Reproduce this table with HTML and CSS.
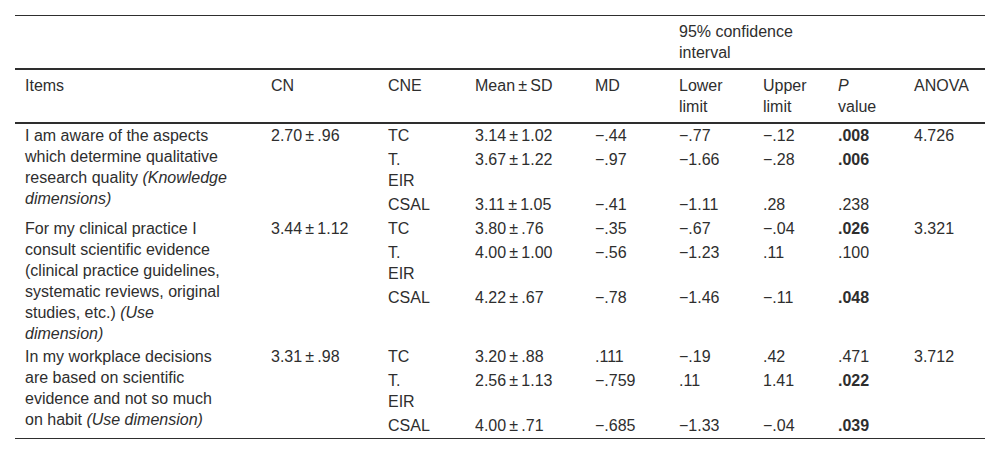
FILE: index.html
```html
<!DOCTYPE html>
<html lang="en">
<head>
<meta charset="utf-8">
<title>Table</title>
<link rel="stylesheet" href="styles.css">
</head>
<body>
<div class="wrap">
<table class="data">
  <colgroup>
    <col class="c-items">
    <col class="c-cn">
    <col class="c-cne">
    <col class="c-mean">
    <col class="c-md">
    <col class="c-lower">
    <col class="c-upper">
    <col class="c-p">
    <col class="c-anova">
  </colgroup>
  <thead>
    <tr class="head-top">
      <th></th><th></th><th></th><th></th><th></th>
      <th colspan="2">95% confidence interval</th>
      <th></th><th></th>
    </tr>
    <tr class="head-main">
      <th>Items</th>
      <th>CN</th>
      <th>CNE</th>
      <th class="nw">Mean&#8201;±&#8201;SD</th>
      <th>MD</th>
      <th>Lower limit</th>
      <th>Upper limit</th>
      <th><i>P</i> value</th>
      <th>ANOVA</th>
    </tr>
  </thead>
  <tbody>
    <tr>
      <td class="item">I am aware of the aspects which determine qualitative research quality <i>(Knowledge dimensions)</i></td>
      <td class="nw">2.70&#8201;±&#8201;.96</td>
      <td colspan="6" class="subcell">
        <div class="sub">
          <div class="cne">TC</div><div>3.14&#8201;±&#8201;1.02</div><div>−.44</div><div>−.77</div><div>−.12</div><div><b>.008</b></div>
          <div class="cne">T. EIR</div><div>3.67&#8201;±&#8201;1.22</div><div>−.97</div><div>−1.66</div><div>−.28</div><div><b>.006</b></div>
          <div class="cne">CSAL</div><div>3.11&#8201;±&#8201;1.05</div><div>−.41</div><div>−1.11</div><div>.28</div><div>.238</div>
        </div>
      </td>
      <td>4.726</td>
    </tr>
    <tr>
      <td class="item">For my clinical practice I consult scientific evidence (clinical practice guidelines, systematic reviews, original studies, etc.) <i>(Use dimension)</i></td>
      <td class="nw">3.44&#8201;±&#8201;1.12</td>
      <td colspan="6" class="subcell">
        <div class="sub">
          <div class="cne">TC</div><div>3.80&#8201;±&#8201;.76</div><div>−.35</div><div>−.67</div><div>−.04</div><div><b>.026</b></div>
          <div class="cne">T. EIR</div><div>4.00&#8201;±&#8201;1.00</div><div>−.56</div><div>−1.23</div><div>.11</div><div>.100</div>
          <div class="cne">CSAL</div><div>4.22&#8201;±&#8201;.67</div><div>−.78</div><div>−1.46</div><div>−.11</div><div><b>.048</b></div>
        </div>
      </td>
      <td>3.321</td>
    </tr>
    <tr>
      <td class="item">In my workplace decisions are based on scientific evidence and not so much on habit <i>(Use dimension)</i></td>
      <td class="nw">3.31&#8201;±&#8201;.98</td>
      <td colspan="6" class="subcell">
        <div class="sub">
          <div class="cne">TC</div><div>3.20&#8201;±&#8201;.88</div><div>.111</div><div>−.19</div><div>.42</div><div>.471</div>
          <div class="cne">T. EIR</div><div>2.56&#8201;±&#8201;1.13</div><div>−.759</div><div>.11</div><div>1.41</div><div><b>.022</b></div>
          <div class="cne">CSAL</div><div>4.00&#8201;±&#8201;.71</div><div>−.685</div><div>−1.33</div><div>−.04</div><div><b>.039</b></div>
        </div>
      </td>
      <td>3.712</td>
    </tr>
  </tbody>
</table>
</div>
</body>
</html>
```

FILE: styles.css
```css
html, body {
  margin: 0;
  padding: 0;
  background: #ffffff;
}

.wrap {
  padding: 15px 15px 0 15px;
}

.data {
  width: 970px;
  table-layout: fixed;
  border-collapse: collapse;
  font-family: "Liberation Sans", Arial, sans-serif;
  font-size: 16px;
  line-height: 21px;
  color: #2e2e2e;
  border-top: 1px solid #2e2e2e;
  border-bottom: 1px solid #2e2e2e;
}

.c-items { width: 246px; }
.c-cn { width: 117px; }
.c-cne { width: 87px; }
.c-mean { width: 120px; }
.c-md { width: 84px; }
.c-lower { width: 84px; }
.c-upper { width: 75px; }
.c-p { width: 76px; }
.c-anova { width: 81px; }

.data th {
  font-weight: normal;
  text-align: left;
  vertical-align: top;
  padding: 5px 33px 5px 10px;
}

.data td {
  text-align: left;
  vertical-align: top;
  padding: 1px 33px 1px 10px;
}

.head-top th,
.head-main th {
  border-bottom: 2px solid #2e2e2e;
}

.data .nw {
  white-space: nowrap;
}

.data td.subcell {
  padding: 0;
}

.sub {
  display: grid;
  grid-template-columns: 87px 120px 84px 84px 75px 76px;
  align-content: start;
}

.sub > div {
  padding: 1px 8px 2px 10px;
  white-space: nowrap;
}

.sub > div.cne {
  padding-right: 40px;
  white-space: normal;
}

.data b {
  font-weight: bold;
}
```
